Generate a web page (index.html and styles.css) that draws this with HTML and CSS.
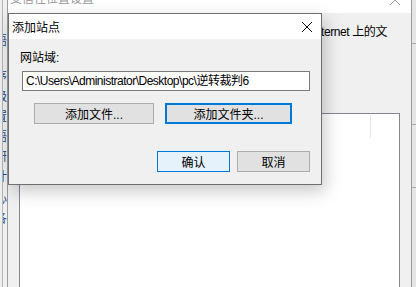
FILE: index.html
```html
<!DOCTYPE html>
<html>
<head>
    <link rel="stylesheet" href="styles.css">
</head>
<body>
    <div class="desk">
        <!-- window behind, only its right edge shows -->
        <div class="back-strip">
            <div class="back-line"></div>
            <div class="back-text">
                <span class="frag f1">语</span>
                <span class="frag f2">序</span>
                <span class="frag">级</span>
                <span class="frag">置</span>
                <span class="frag">语</span>
                <span class="frag">研</span>
                <span class="frag f3">计</span>
                <span class="frag">心</span>
                <span class="frag">各</span>
            </div>
        </div>

        <div class="parent">
            <div class="parent-title">
                <span class="parent-caption">受信任位置设置</span>
                <svg class="parent-close" width="10" height="10" viewBox="0 0 10 10">
                    <path d="M0 0L10 10M10 0L0 10" stroke="#a3a3a3" stroke-width="1"/>
                </svg>
            </div>
            <div class="parent-body">
                <div class="hint-row"><span class="hint">Internet 上的文</span></div>
                <div class="list">
                    <div class="list-head"><span class="col-sep"></span></div>
                </div>
            </div>
        </div>

        <div class="right-strip">
            <div class="rs-cell c1"></div>
            <div class="rs-cell c2"></div>
            <div class="rs-cell c3"></div>
        </div>

        <!-- modal dialog on top -->
        <div class="dialog">
            <div class="dlg-title">
                <span class="dlg-caption">添加站点</span>
                <svg class="dlg-close" width="10" height="10" viewBox="0 0 10 10">
                    <path d="M0 0L10 10M10 0L0 10" stroke="#111" stroke-width="1"/>
                </svg>
            </div>
            <div class="dlg-body">
                <div class="field-label">网站域:</div>
                <div class="path-input">C:\Users\Administrator\Desktop\pc\逆转裁判6</div>
                <div class="btn-row top">
                    <div class="btn add-file">添加文件...</div>
                    <div class="btn add-folder focused">添加文件夹...</div>
                </div>
                <div class="btn-row bottom">
                    <div class="btn ok default">确认</div>
                    <div class="btn cancel">取消</div>
                </div>
            </div>
        </div>
    </div>
</body>
</html>
```

FILE: styles.css
```css
body {
    margin: 0;
    font-family: "Liberation Sans", "Noto Sans CJK SC", sans-serif;
    font-size: 12px;
    color: #000;
    background-color: #f0f0f0;
    overflow: hidden;
}
.desk {
    position: relative;
    display: flex;
    width: 416px;
    height: 287px;
    overflow: hidden;
}

/* left strip: edge of the window in the back */
.back-strip {
    display: flex;
    width: 7px;
    flex-shrink: 0;
    background-color: #f0f0f0;
}
.back-line {
    width: 1px;
    margin-left: 2px;
    background-color: #b4b4b4;
}
.back-text {
    width: 4px;
    overflow: hidden;
    display: flex;
    flex-direction: column;
    padding-top: 33px;
}
.frag {
    display: block;
    margin-left: -8px;
    height: 20px;
    line-height: 16px;
    color: #24448a;
}
.frag.f1 { height: 36px; }
.frag.f3 { height: 22px; }

/* parent window */
.parent {
    display: flex;
    flex-direction: column;
    width: 405px;
    flex-shrink: 0;
    box-sizing: border-box;
    border-left: 1px solid #9b9b9b;
    border-right: 1px solid #9b9b9b;
}
.parent-title {
    display: flex;
    height: 13px;
    overflow: hidden;
    background-color: #fff;
}
.parent-caption {
    padding-left: 2px;
    margin-top: -9px;
    line-height: 16px;
    color: #9a9a9a;
}
.parent-close {
    margin-left: auto;
    margin-right: 11px;
    margin-top: -5px;
}
.parent-body {
    flex: 1;
    display: flex;
    flex-direction: column;
    background-color: #f0f0f0;
}
.hint-row {
    display: flex;
    justify-content: flex-end;
    padding-right: 24px;
    padding-top: 11px;
    line-height: 16px;
    height: 16px;
    overflow: hidden;
}
.hint {
    white-space: nowrap;
    letter-spacing: -0.4px;
}
.list {
    flex: 1;
    margin-top: 73px;
    margin-left: 11px;
    width: 381px;
    box-sizing: border-box;
    border: 1px solid #828790;
    border-bottom: none;
    background-color: #fff;
}
.list-head {
    height: 25px;
    display: flex;
    align-items: center;
}
.col-sep {
    width: 1px;
    height: 23px;
    margin-left: 350px;
    background-color: #e5e5e5;
}

/* right strip: another window */
.right-strip {
    flex: 1;
    display: flex;
    flex-direction: column;
    background-color: #e6e6e6;
}
.rs-cell {
    border-bottom: 1px solid #a8a8a8;
}
.rs-cell.c1 { height: 43px; }
.rs-cell.c2 { height: 80px; }
.rs-cell.c3 { height: 62px; }

/* dialog */
.dialog {
    position: absolute;
    left: 8px;
    top: 13px;
    width: 314px;
    height: 172px;
    box-sizing: border-box;
    border: 1px solid #6f6f6f;
    display: flex;
    flex-direction: column;
    box-shadow: 3px 6px 16px rgba(0, 0, 0, 0.22);
}
.dlg-title {
    height: 25px;
    display: flex;
    align-items: center;
    background-color: #fff;
}
.dlg-caption {
    padding-left: 3px;
}
.dlg-close {
    margin-left: auto;
    margin-right: 9px;
}
.dlg-body {
    flex: 1;
    display: flex;
    flex-direction: column;
    align-items: flex-start;
    background-color: #f0f0f0;
    padding-top: 11px;
}
.field-label {
    margin-left: 11px;
    line-height: 16px;
}
.path-input {
    margin-top: 5px;
    margin-left: 13px;
    width: 288px;
    height: 20px;
    box-sizing: border-box;
    border: 1px solid #7a7a7a;
    background-color: #fff;
    padding-left: 3px;
    line-height: 18px;
    letter-spacing: -0.5px;
    white-space: nowrap;
    overflow: hidden;
}
.btn-row {
    display: flex;
}
.btn-row.top {
    margin-top: 12px;
    margin-left: 25px;
    gap: 11px;
}
.btn-row.bottom {
    margin-top: 27px;
    margin-left: 148px;
    gap: 7px;
}
.btn {
    height: 21px;
    box-sizing: border-box;
    border: 1px solid #adadad;
    background-color: #e1e1e1;
    display: flex;
    align-items: center;
    justify-content: center;
}
.add-file { width: 120px; }
.add-folder { width: 127px; }
.ok, .cancel { width: 73px; }
.btn.focused {
    border: 2px solid #0078d7;
}
.btn.default {
    border-color: #0078d7;
    background-color: #e5f1fb;
}
```
